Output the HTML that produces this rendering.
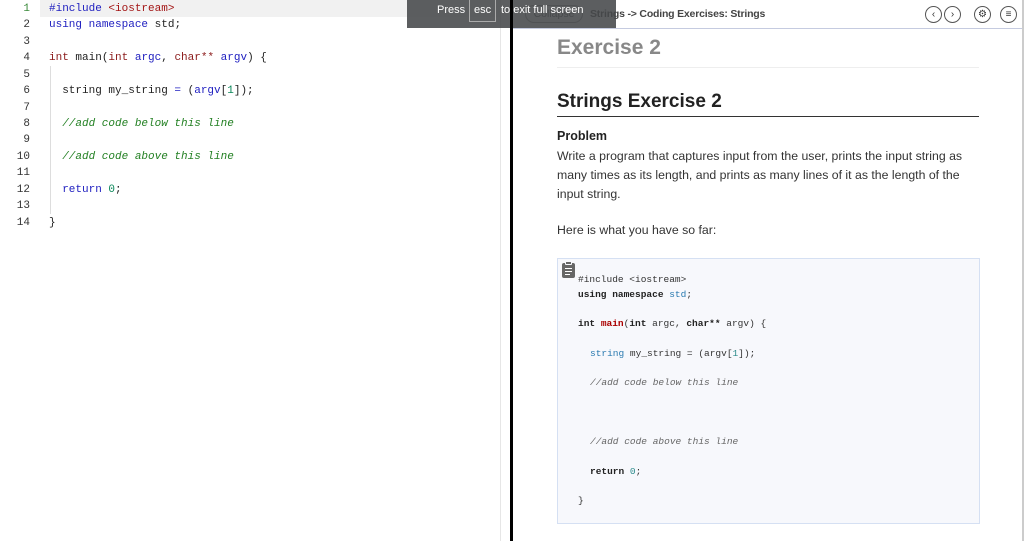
<!DOCTYPE html>
<html><head><meta charset="utf-8"><style>
*{margin:0;padding:0;box-sizing:border-box}
body{width:1024px;height:541px;overflow:hidden;background:#fff;position:relative;font-family:"Liberation Sans",sans-serif}
.ed{position:absolute;left:0;top:0;width:501px;height:541px;border-right:1px solid #e6e6e6;font-family:"Liberation Mono",monospace;font-size:11px}
.ln{position:absolute;left:0;width:30px;text-align:right;color:#333}
.cd{position:absolute;left:49px;white-space:pre;color:#222}
.hl{position:absolute;left:40px;top:0;width:460px;height:17px;background:#f1f1f1}
.kw{color:#2020c0}.ty{color:#8b1a1a}.str{color:#a31515}.cm{color:#238023;font-style:italic}.nm{color:#098658}
.vline{position:absolute;left:50px;top:66px;width:1px;height:148px;background:#ddd}
.bar{position:absolute;left:510px;top:0;width:3px;height:541px;background:#000}
.ov{position:absolute;left:407px;top:0;width:209px;height:28px;background:rgba(70,72,74,0.88);color:#fff;font-size:11px;white-space:nowrap}
.hdr{position:absolute;left:513px;top:0;width:511px;height:29px;border-bottom:1px solid #c5cbe0;background:#fff}
.rp{position:absolute;left:557px}
.circ{position:absolute;top:6px;width:17px;height:17px;border:1px solid #555;border-radius:50%;font-size:10px;text-align:center;line-height:15px;color:#333}
.box{position:absolute;left:557px;top:258px;width:423px;height:266px;background:#f7f8fc;border:1px solid #d5e0f3;font-family:"Liberation Mono",monospace;font-size:9.5px;color:#333}
.box div{position:absolute;white-space:pre}
.b{font-weight:bold;color:#222}
</style></head><body>
<div class="ed">
<div class="hl"></div>
<div class="vline"></div>
<div class="ln" style="top:3px;color:#3a8a3a">1</div><div class="cd" style="top:3px"><span class="kw">#include</span> <span class="str">&lt;iostream&gt;</span></div>
<div class="ln" style="top:19px">2</div><div class="cd" style="top:19px"><span class="kw">using</span> <span class="kw">namespace</span> std;</div>
<div class="ln" style="top:36px">3</div>
<div class="ln" style="top:52px">4</div><div class="cd" style="top:52px"><span class="ty">int</span> main(<span class="ty">int</span> <span class="kw">argc</span>, <span class="ty">char**</span> <span class="kw">argv</span>) {</div>
<div class="ln" style="top:69px">5</div>
<div class="ln" style="top:85px">6</div><div class="cd" style="top:85px">  string my_string <span class="kw">=</span> (<span class="kw">argv</span>[<span class="nm">1</span>]);</div>
<div class="ln" style="top:102px">7</div>
<div class="ln" style="top:118px">8</div><div class="cd cm" style="top:118px">  //add code below this line</div>
<div class="ln" style="top:134px">9</div>
<div class="ln" style="top:151px">10</div><div class="cd cm" style="top:151px">  //add code above this line</div>
<div class="ln" style="top:167px">11</div>
<div class="ln" style="top:184px">12</div><div class="cd" style="top:184px">  <span class="kw">return</span> <span class="nm">0</span>;</div>
<div class="ln" style="top:200px">13</div>
<div class="ln" style="top:217px">14</div><div class="cd" style="top:217px">}</div>
</div>
<div class="hdr">
<div style="position:absolute;left:12px;top:5px;width:58px;height:18px;border:1px solid #999;border-radius:9px;font-size:10.5px;color:#555;text-align:center;line-height:16px">Collapse</div>
<div style="position:absolute;left:77px;top:8px;font-size:10.5px;color:#444;font-weight:bold;letter-spacing:-0.2px">Strings -&gt; Coding Exercises: Strings</div>
<div class="circ" style="left:412px">&lsaquo;</div>
<div class="circ" style="left:431px">&rsaquo;</div>
<div class="circ" style="left:461px">&#9881;</div>
<div class="circ" style="left:487px">&#8801;</div>
</div>
<div style="position:absolute;left:1022px;top:0;width:2px;height:541px;background:#ccc"></div>
<div class="ov"><span style="position:absolute;left:30px;top:4px">Press</span><span style="position:absolute;left:62px;top:-1px;height:23px;width:27px;border:1px solid #aaa;border-top:none;padding:5px 0 0 4px">esc</span><span style="position:absolute;left:94px;top:4px">to exit full screen</span></div>
<div class="bar"></div>
<div class="rp" style="top:36px;font-size:21px;font-weight:bold;color:#888">Exercise 2</div>
<div style="position:absolute;left:557px;top:67px;width:422px;height:1px;background:#eee"></div>
<div class="rp" style="top:91px;font-size:19px;font-weight:bold;color:#222">Strings Exercise 2</div>
<div style="position:absolute;left:557px;top:116px;width:422px;height:1px;background:#333"></div>
<div class="rp" style="top:129px;font-size:12.5px;font-weight:bold;color:#222">Problem</div>
<div class="rp" style="top:147px;width:430px;font-size:12.3px;line-height:19px;color:#333">Write a program that captures input from the user, prints the input string as many times as its length, and prints as many lines of it as the length of the input string.</div>
<div class="rp" style="top:223px;font-size:12.3px;color:#333">Here is what you have so far:</div>
<div class="box">
<div style="left:4px;top:4px;width:13px;height:15px;background:#666;border-radius:2px"></div>
<div style="left:7px;top:2px;width:7px;height:4px;background:#666;border:1px solid #f7f8fc;border-radius:1px"></div>
<div style="left:7px;top:9px;width:7px;height:1px;background:#fff"></div>
<div style="left:7px;top:12px;width:7px;height:1px;background:#fff"></div>
<div style="left:7px;top:15px;width:5px;height:1px;background:#fff"></div>
<div style="top:15px;left:20px">#include &lt;iostream&gt;</div>
<div style="top:30px;left:20px"><span class="b">using namespace</span> <span style="color:#2a7ab0">std</span>;</div>
<div style="top:59px;left:20px"><span class="b">int</span> <span class="b" style="color:#a00">main</span>(<span class="b">int</span> argc, <span class="b">char**</span> argv) {</div>
<div style="top:89px;left:32px"><span style="color:#2a7ab0">string</span> my_string = (argv[<span style="color:#2a8a8a">1</span>]);</div>
<div style="top:118px;left:32px;font-style:italic;color:#666">//add code below this line</div>
<div style="top:177px;left:32px;font-style:italic;color:#666">//add code above this line</div>
<div style="top:207px;left:32px"><span class="b">return</span> <span style="color:#2a8a8a">0</span>;</div>
<div style="top:236px;left:20px">}</div>
</div>
</body></html>
